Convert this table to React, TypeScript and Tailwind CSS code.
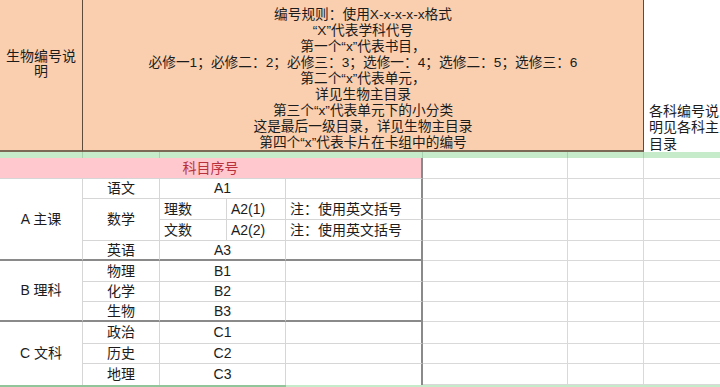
import React from "react";

const ORANGE = "bg-[#f9cfb0]";

export default function App() {
  const headerLines = [
    "编号规则：使用X-x-x-x-x格式",
    "“X”代表学科代号",
    "第一个“x”代表书目，",
    "必修一1；必修二：2；必修三：3；选修一：4；选修二：5；选修三：6",
    "第二个“x”代表单元，",
    "详见生物主目录",
    "第三个“x”代表单元下的小分类",
    "这是最后一级目录，详见生物主目录",
    "第四个“x”代表卡片在卡组中的编号",
  ];

  const bodyRows = [3, 4, 5, 6, 7, 8, 9, 10, 11, 12, 13];
  const rowStart: Record<number, string> = {
    3: "row-start-3",
    4: "row-start-4",
    5: "row-start-5",
    6: "row-start-6",
    7: "row-start-7",
    8: "row-start-8",
    9: "row-start-9",
    10: "row-start-10",
    11: "row-start-11",
    12: "row-start-12",
    13: "row-start-13",
  };

  const cell = "flex items-center border-b border-r border-[#d6d6d6]";
  const thickB = "border-b-2 border-b-[#8a8a8a]";

  return (
    <div
      className="w-[720px] h-[387px] overflow-hidden bg-white text-[#1c1c1c] text-[14px]"
      style={{ fontFamily: '"Liberation Sans", "Noto Sans CJK SC", sans-serif' }}
    >
      <div className="grid grid-cols-[83px_77px_67px_59px_137px_145px_76px_76px] grid-rows-[152px_6px_21px_20px_21px_21px_20px_21px_20px_20px_22px_20px_21px_2px]">
        {/* Header row */}
        <div className={`col-start-1 row-start-1 ${ORANGE} border-r border-r-[#5e4c3b] border-b-2 border-b-[#7a6a55] pt-[49px] px-[6px] text-center leading-[15px]`}>
          生物编号说明
        </div>
        <div className={`col-start-2 col-span-6 row-start-1 ${ORANGE} border-r border-r-[#5e4c3b] border-b-2 border-b-[#7a6a55] pt-[7px] flex flex-col items-center leading-[16px] text-[13.7px]`}>
          {headerLines.map((l, i) => (
            <div key={i} className="whitespace-nowrap">
              {l}
            </div>
          ))}
        </div>
        <div className="col-start-8 row-start-1 flex items-end pl-[5px] leading-[16.3px] bg-white">
          <div>各科编号说明见各科主目录</div>
        </div>

        {/* Green strip */}
        <div className="col-start-1 row-start-2 bg-[#c6ebcb] border-r border-[#a9d3b0]" />
        <div className="col-start-2 row-start-2 bg-[#c6ebcb] border-r border-[#a9d3b0]" />
        <div className="col-start-3 col-span-3 row-start-2 bg-[#c6ebcb] border-r border-[#a9d3b0]" />
        <div className="col-start-6 row-start-2 bg-[#c6ebcb] border-r border-[#a9d3b0]" />
        <div className="col-start-7 row-start-2 bg-[#c6ebcb] border-r border-[#a9d3b0]" />
        <div className="col-start-8 row-start-2 bg-[#c6ebcb]" />

        {/* Pink title row */}
        <div className="col-start-1 col-span-5 row-start-3 flex items-center justify-center bg-[#ffc8cf] text-[#b8323e] border-b border-b-[#d6d6d6] border-r-2 border-r-[#8a8a8a]">
          科目序号
        </div>

        {/* Right empty cells */}
        {bodyRows.map((r) => (
          <React.Fragment key={r}>
            <div className={`col-start-6 ${rowStart[r]} border-b border-r border-[#d9d9d9]`} />
            <div className={`col-start-7 ${rowStart[r]} border-b border-r border-[#d9d9d9]`} />
            <div className={`col-start-8 ${rowStart[r]} border-b border-[#d9d9d9]`} />
          </React.Fragment>
        ))}

        {/* Group A */}
        <div className={`col-start-1 row-start-4 row-span-4 ${cell} ${thickB} justify-center`}>A 主课</div>
        <div className={`col-start-2 row-start-4 ${cell} justify-center`}>语文</div>
        <div className={`col-start-3 col-span-2 row-start-4 ${cell} justify-center`}>A1</div>
        <div className={`col-start-5 row-start-4 ${cell} border-r-2 border-r-[#8a8a8a]`} />

        <div className={`col-start-2 row-start-5 row-span-2 ${cell} justify-center`}>数学</div>
        <div className={`col-start-3 row-start-5 ${cell} pl-[4px]`}>理数</div>
        <div className={`col-start-4 row-start-5 ${cell} pl-[4px]`}>A2(1)</div>
        <div className={`col-start-5 row-start-5 ${cell} pl-[4px] border-r-2 border-r-[#8a8a8a]`}>注：使用英文括号</div>
        <div className={`col-start-3 row-start-6 ${cell} pl-[4px]`}>文数</div>
        <div className={`col-start-4 row-start-6 ${cell} pl-[4px]`}>A2(2)</div>
        <div className={`col-start-5 row-start-6 ${cell} pl-[4px] border-r-2 border-r-[#8a8a8a]`}>注：使用英文括号</div>

        <div className={`col-start-2 row-start-7 ${cell} ${thickB} justify-center`}>英语</div>
        <div className={`col-start-3 col-span-2 row-start-7 ${cell} ${thickB} justify-center`}>A3</div>
        <div className={`col-start-5 row-start-7 ${cell} ${thickB} border-r-2 border-r-[#8a8a8a]`} />

        {/* Group B */}
        <div className={`col-start-1 row-start-8 row-span-3 ${cell} ${thickB} justify-center`}>B 理科</div>
        <div className={`col-start-2 row-start-8 ${cell} justify-center`}>物理</div>
        <div className={`col-start-3 col-span-2 row-start-8 ${cell} justify-center`}>B1</div>
        <div className={`col-start-5 row-start-8 ${cell} border-r-2 border-r-[#8a8a8a]`} />
        <div className={`col-start-2 row-start-9 ${cell} justify-center`}>化学</div>
        <div className={`col-start-3 col-span-2 row-start-9 ${cell} justify-center`}>B2</div>
        <div className={`col-start-5 row-start-9 ${cell} border-r-2 border-r-[#8a8a8a]`} />
        <div className={`col-start-2 row-start-10 ${cell} ${thickB} justify-center`}>生物</div>
        <div className={`col-start-3 col-span-2 row-start-10 ${cell} ${thickB} justify-center`}>B3</div>
        <div className={`col-start-5 row-start-10 ${cell} ${thickB} border-r-2 border-r-[#8a8a8a]`} />

        {/* Group C */}
        <div className="col-start-1 row-start-11 row-span-3 flex items-center justify-center border-r border-[#d6d6d6]">C 文科</div>
        <div className={`col-start-2 row-start-11 ${cell} justify-center`}>政治</div>
        <div className={`col-start-3 col-span-2 row-start-11 ${cell} justify-center`}>C1</div>
        <div className={`col-start-5 row-start-11 ${cell} border-r-2 border-r-[#8a8a8a]`} />
        <div className={`col-start-2 row-start-12 ${cell} justify-center`}>历史</div>
        <div className={`col-start-3 col-span-2 row-start-12 ${cell} justify-center`}>C2</div>
        <div className={`col-start-5 row-start-12 ${cell} border-r-2 border-r-[#8a8a8a]`} />
        <div className="col-start-2 row-start-13 flex items-center justify-center border-r border-[#d6d6d6]">地理</div>
        <div className="col-start-3 col-span-2 row-start-13 flex items-center justify-center border-r border-[#d6d6d6]">C3</div>
        <div className="col-start-5 row-start-13 border-r-2 border-r-[#8a8a8a]" />

        {/* Bottom green line */}
        <div className="col-start-1 col-span-4 row-start-14 bg-[#93c59b]" />
        <div className="col-start-5 col-span-4 row-start-14 bg-[#c6ebcb]" />
      </div>
    </div>
  );
}
